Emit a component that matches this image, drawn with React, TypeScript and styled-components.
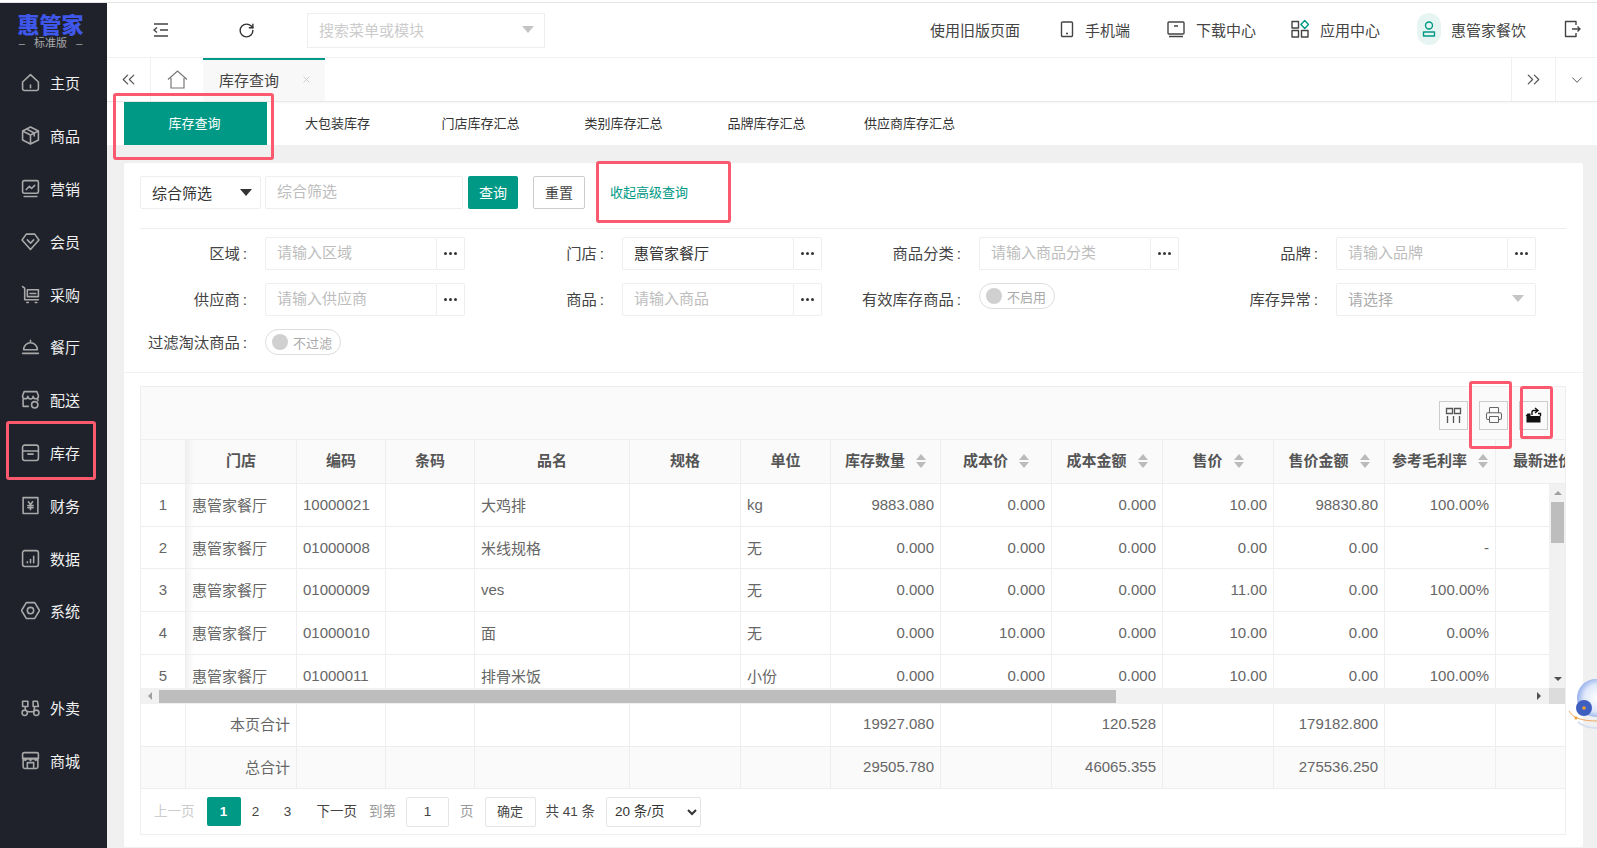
import React from "react"
import styled, { createGlobalStyle } from "styled-components"
import { ChevronDown, ChevronsLeft, ChevronsRight, Printer, RotateCw, X } from "lucide-react"

const GREEN = "#009985"
const LINE = "#eeeeee"
const COLS = "45px 111px 89px 89px 155px 111px 90px 110px 111px 111px 111px 111px 111px 95px"
const BODY_COLS = "45px 111px 89px 89px 155px 111px 90px 110px 111px 111px 111px 111px 111px 54px"

const GlobalStyle = createGlobalStyle`
  html, body {
    margin: 0;
    padding: 0;
    height: 100%;
    overflow: hidden;
    background: #fff;
    font-family: "Liberation Sans", "Noto Sans CJK SC", sans-serif;
    font-size: 15px;
    color: #333;
  }
  * { box-sizing: border-box; }
`

const Shell = styled.div`
  position: relative;
  display: flex;
  width: 1597px;
  height: 848px;
  overflow: hidden;
  padding-top: 3px;
  background: linear-gradient(#fff 0 2px, #e4e4e4 2px 3px, #fff 3px);
`

const Sidebar = styled.aside`
  width: 107px;
  flex: none;
  background: #1f222b;
  color: #f0f0f0;
`

const Logo = styled.div`
  height: 54px;
  display: flex;
  flex-direction: column;
  align-items: center;
  padding: 7px 6px 0 0;
`

const LogoName = styled.div`
  font-family: "Noto Sans CJK SC", sans-serif;
  font-weight: 900;
  font-size: 22px;
  line-height: 26px;
  color: #3f57ea;
`

const LogoEdition = styled.div`
  font-size: 11px;
  line-height: 14px;
  color: #a8a8a8;
  white-space: pre;
`

const NavItem = styled.div<{ $gap?: boolean }>`
  height: 52.8px;
  display: flex;
  align-items: center;
  gap: 10px;
  padding: 0 0 1px 21px;
  font-size: 15px;
  margin-top: ${p => (p.$gap ? "44px" : "0")};
`

const NavIcon = styled.svg`
  width: 19px;
  height: 19px;
  fill: none;
  stroke: #a9a9a9;
  stroke-width: 1.5;
  stroke-linejoin: round;
  stroke-linecap: round;
`

const Content = styled.div`
  flex: 1;
  min-width: 0;
  display: flex;
  flex-direction: column;
`

const TopBar = styled.header`
  height: 55px;
  flex: none;
  display: flex;
  align-items: center;
  border-bottom: 1px solid #f2f2f2;
`

const ToolIcon = styled.div<{ $w: number }>`
  width: ${p => p.$w}px;
  flex: none;
  display: flex;
  justify-content: center;
  color: #333;
`

const SearchBox = styled.div`
  width: 238px;
  height: 35px;
  margin-left: 28px;
  border: 1px solid #eee;
  display: flex;
  align-items: center;
  justify-content: space-between;
  padding: 0 10px 2px 11px;
  color: #ccc;
  font-size: 15px;
`

const Caret = styled.i<{ $color?: string }>`
  width: 0;
  height: 0;
  border-left: 6px solid transparent;
  border-right: 6px solid transparent;
  border-top: 7px solid ${p => p.$color || "#c4c4c4"};
`

const TopActions = styled.div`
  margin-left: auto;
  display: flex;
  align-items: center;
  padding: 0 15px 2px 0;
  color: #444;
  font-size: 15px;
`

const TopAction = styled.div<{ $left: number; $gap?: number }>`
  display: flex;
  align-items: center;
  gap: ${p => p.$gap ?? 12}px;
  margin-left: ${p => p.$left}px;
  white-space: nowrap;
`

const TopIcon = styled.svg<{ $teal?: boolean }>`
  width: 20px;
  height: 20px;
  fill: none;
  stroke: ${p => (p.$teal ? GREEN : "#444")};
  stroke-width: 1.4;
  stroke-linejoin: round;
`

const Avatar = styled.span`
  width: 24px;
  height: 32px;
  border-radius: 12px;
  background: #e6f5f2;
  display: flex;
  align-items: center;
  justify-content: center;
`

const TabBar = styled.nav`
  height: 44px;
  flex: none;
  display: flex;
  align-items: stretch;
  border-bottom: 1px solid #e8e8e8;
  box-shadow: 0 1px 2px rgba(0, 0, 0, 0.04);
  position: relative;
`

const TabIconCell = styled.div<{ $w: number; $border?: string }>`
  width: ${p => p.$w}px;
  flex: none;
  display: flex;
  align-items: center;
  justify-content: center;
  color: #555;
  border-left: ${p => (p.$border === "left" ? "1px solid #f0f0f0" : "0")};
  border-right: ${p => (p.$border === "right" ? "1px solid #f0f0f0" : "0")};
`

const PageTab = styled.div`
  width: 122px;
  flex: none;
  border-top: 2px solid ${GREEN};
  background: #f8f8f8;
  display: flex;
  align-items: center;
  gap: 22px;
  padding: 0 0 3px 16px;
  font-size: 15px;
  color: #444;
`

const Spacer = styled.div`
  flex: 1;
`

const SubTabs = styled.div`
  height: 43px;
  flex: none;
  display: flex;
  padding-left: 17px;
  background: #fff;
`

const SubTab = styled.div<{ $active?: boolean }>`
  width: 143px;
  display: flex;
  align-items: center;
  justify-content: center;
  padding: 0 2px 2px 0;
  font-size: 13px;
  background: ${p => (p.$active ? GREEN : "transparent")};
  color: ${p => (p.$active ? "#fff" : "#333")};
`

const Main = styled.main`
  flex: 1;
  min-height: 0;
  background: #f0f0f0;
  padding: 18px 14px 0 17px;
`

const Card = styled.section`
  height: 684px;
  background: #fff;
  border-radius: 2px;
`

const Filters = styled.div`
  padding: 13px 17px 17px 16px;
  border-bottom: 1px solid #f2f2f2;
`

const QueryRow = styled.div`
  height: 33px;
  display: flex;
  align-items: stretch;
  margin-bottom: 19px;
`

const QuerySelect = styled.div`
  width: 121px;
  border: 1px solid #eee;
  border-radius: 2px;
  display: flex;
  align-items: center;
  justify-content: space-between;
  padding: 0 8px 1px 11px;
  color: #333;
`

const TextInput = styled.input<{ $w?: number; $left?: number }>`
  width: ${p => (p.$w ? `${p.$w}px` : "100%")};
  min-width: 0;
  height: 100%;
  margin-left: ${p => p.$left ?? 0}px;
  border: 1px solid #eee;
  border-radius: 2px;
  outline: 0;
  padding: 0 11px 2px;
  font: inherit;
  color: #333;
  &::placeholder { color: #bdbdbd; }
`

const PrimaryBtn = styled.div`
  width: 50px;
  margin-left: 5px;
  padding-bottom: 2px;
  background: ${GREEN};
  border-radius: 2px;
  color: #fff;
  font-size: 14px;
  display: flex;
  align-items: center;
  justify-content: center;
`

const GhostBtn = styled.div`
  width: 52px;
  margin-left: 15px;
  padding-bottom: 2px;
  border: 1px solid #ccc;
  border-radius: 2px;
  color: #444;
  font-size: 14px;
  display: flex;
  align-items: center;
  justify-content: center;
`

const LinkText = styled.div`
  margin-left: 25px;
  padding-bottom: 2px;
  color: ${GREEN};
  font-size: 13px;
  display: flex;
  align-items: center;
`

const FormGrid = styled.div`
  border-top: 1px solid ${LINE};
  padding-top: 8px;
  display: grid;
  grid-template-columns: repeat(4, 357px);
  row-gap: 13px;
`

const Field = styled.div`
  display: flex;
  align-items: center;
`

const Label = styled.label`
  width: 108px;
  margin-right: 17px;
  padding: 0 1px 3px 0;
  flex: none;
  display: flex;
  align-items: baseline;
  justify-content: flex-end;
  color: #444;
  font-size: 15.3px;
  white-space: nowrap;
`

const Colon = styled.span`
  margin-left: 3px;
`

const InputGroup = styled.div`
  width: 200px;
  height: 33px;
  display: flex;
`

const DotsBtn = styled.div`
  width: 28px;
  flex: none;
  border: 1px solid #eee;
  border-left: 0;
  border-radius: 0 2px 2px 0;
  display: flex;
  align-items: center;
  justify-content: center;
  gap: 2px;
`

const Dot = styled.i`
  width: 3px;
  height: 3px;
  border-radius: 50%;
  background: #333;
`

const SelectBox = styled.div`
  width: 200px;
  height: 33px;
  border: 1px solid #eee;
  border-radius: 2px;
  display: flex;
  align-items: center;
  justify-content: space-between;
  padding: 0 11px 2px;
  color: #aaa;
`

const Toggle = styled.div`
  width: 76px;
  height: 26px;
  align-self: flex-start;
  border: 1px solid #ddd;
  border-radius: 13px;
  display: flex;
  align-items: center;
  gap: 5px;
  padding-left: 6px;
  color: #aaa;
  font-size: 13px;
`

const Knob = styled.i`
  width: 16px;
  height: 16px;
  border-radius: 50%;
  background: #d0d0d0;
`

const TableBox = styled.div`
  margin: 13px 17px 0 16px;
  border: 1px solid ${LINE};
  overflow: hidden;
`

const TableTools = styled.div`
  height: 53px;
  background: #fafafa;
  display: flex;
  align-items: center;
  justify-content: flex-end;
  gap: 11px;
  padding: 4px 17px 0 0;
  border-bottom: 1px solid ${LINE};
`

const ToolBtn = styled.div`
  width: 29px;
  height: 29px;
  border: 1px solid #ccc;
  display: flex;
  align-items: center;
  justify-content: center;
  color: #666;
`

const Row = styled.div<{ $cols: string; $h: number; $bg?: string }>`
  display: grid;
  grid-template-columns: ${p => p.$cols};
  height: ${p => p.$h}px;
  background: ${p => p.$bg || "#fff"};
  border-bottom: 1px solid ${LINE};
  flex: none;
`

const HeadCell = styled.div<{ $shadow?: boolean }>`
  display: flex;
  align-items: center;
  justify-content: center;
  gap: 11px;
  border-right: 1px solid ${LINE};
  padding-bottom: 4px;
  font-weight: 700;
  font-size: 15px;
  color: #555;
  white-space: nowrap;
  background: ${p => (p.$shadow ? "linear-gradient(90deg, #efefef, transparent 8px)" : "none")};
`

const Cell = styled.div<{ $align?: string; $shadow?: boolean; $lift?: number }>`
  display: flex;
  align-items: center;
  justify-content: ${p =>
    p.$align === "right" ? "flex-end" : p.$align === "center" ? "center" : "flex-start"};
  padding: 0 6px ${p => p.$lift ?? 1}px;
  border-right: 1px solid ${LINE};
  color: #666;
  font-size: 15px;
  white-space: nowrap;
  background: ${p => (p.$shadow ? "linear-gradient(90deg, #f2f2f2, transparent 8px)" : "none")};
`

const Sort = styled.span`
  display: flex;
  flex-direction: column;
  gap: 2px;
  margin-top: 3px;
`

const SortUp = styled.i`
  width: 0;
  height: 0;
  border-left: 5.5px solid transparent;
  border-right: 5.5px solid transparent;
  border-bottom: 6px solid #bbb;
`

const SortDown = styled.i`
  width: 0;
  height: 0;
  border-left: 5.5px solid transparent;
  border-right: 5.5px solid transparent;
  border-top: 6px solid #bbb;
`

const BodyWrap = styled.div`
  display: flex;
  height: 204px;
  overflow: hidden;
`

const BodyRows = styled.div`
  width: 1408px;
  flex: none;
  overflow: hidden;
`

const VScroll = styled.div`
  width: 17px;
  flex: none;
  background: #f1f1f1;
  display: flex;
  flex-direction: column;
  align-items: center;
  padding-top: 7px;
`

const ArrowUp = styled.i`
  width: 0;
  height: 0;
  border-left: 4px solid transparent;
  border-right: 4px solid transparent;
  border-bottom: 4px solid #a0a0a0;
`

const ArrowDown = styled.i`
  width: 0;
  height: 0;
  margin-top: auto;
  margin-bottom: 7px;
  border-left: 4px solid transparent;
  border-right: 4px solid transparent;
  border-top: 4px solid #505050;
`

const VThumb = styled.div`
  width: 13px;
  height: 41px;
  margin-top: 7px;
  background: #bdbdbd;
`

const HScroll = styled.div`
  height: 16px;
  background: #f1f1f1;
  display: flex;
  align-items: center;
  padding-left: 7px;
`

const ArrowLeft = styled.i`
  width: 0;
  height: 0;
  border-top: 4px solid transparent;
  border-bottom: 4px solid transparent;
  border-right: 4px solid #a0a0a0;
`

const ArrowRight = styled.i`
  width: 0;
  height: 0;
  margin-left: auto;
  border-top: 4px solid transparent;
  border-bottom: 4px solid transparent;
  border-left: 4px solid #505050;
`

const HThumb = styled.div`
  width: 957px;
  height: 13px;
  margin-left: 7px;
  background: #bdbdbd;
`

const Corner = styled.div`
  width: 16px;
  height: 16px;
  margin-left: 8px;
  background: #dcdcdc;
`

const Pager = styled.div`
  height: 45px;
  display: flex;
  align-items: center;
  padding-left: 13px;
  font-size: 13.5px;
  color: #444;
`

const PageText = styled.span<{ $color?: string; $left?: number }>`
  color: ${p => p.$color || "#444"};
  margin-left: ${p => p.$left ?? 0}px;
  padding-bottom: 3px;
  white-space: nowrap;
`

const PageNum = styled.span<{ $active?: boolean; $left?: number }>`
  width: 34px;
  height: 29px;
  flex: none;
  margin-left: ${p => p.$left ?? 0}px;
  border-radius: 2px;
  background: ${p => (p.$active ? GREEN : "transparent")};
  color: ${p => (p.$active ? "#fff" : "#444")};
  font-weight: ${p => (p.$active ? 700 : 400)};
  display: flex;
  align-items: center;
  justify-content: center;
`

const PageInput = styled.div`
  width: 43px;
  height: 30px;
  margin-left: 10px;
  border: 1px solid #e4e4e4;
  border-radius: 2px;
  display: flex;
  align-items: center;
  justify-content: center;
`

const PageBtn = styled.div`
  width: 51px;
  height: 30px;
  margin-left: 11px;
  padding-bottom: 2px;
  border: 1px solid #e4e4e4;
  border-radius: 2px;
  display: flex;
  align-items: center;
  justify-content: center;
  font-size: 13px;
`

const PageSelect = styled.select`
  width: 95px;
  height: 30px;
  margin-left: 11px;
  padding-left: 4px;
  border: 1px solid #e4e4e4;
  border-radius: 2px;
  background: #fff;
  font: inherit;
  color: #333;
`

// red annotation boxes drawn on top of the screenshot
const Mark = styled.div<{ $l: number; $t: number; $w: number; $h: number }>`
  position: absolute;
  left: ${p => p.$l}px;
  top: ${p => p.$t}px;
  width: ${p => p.$w}px;
  height: ${p => p.$h}px;
  border: 3px solid #fb5a6e;
  border-radius: 3px;
  pointer-events: none;
`

const Ball = styled.svg`
  position: absolute;
  left: 1568px;
  top: 678px;
  width: 29px;
  height: 52px;
`

const nav: { label: string; icon: React.ReactNode; gap?: boolean }[] = [
  { label: "主页", icon: <path d="M1.5 8.5 9 1.5l7.5 7V15a1.5 1.5 0 0 1-1.5 1.5H3A1.5 1.5 0 0 1 1.5 15zM9 11.5V14" /> },
  { label: "商品", icon: <path d="M9 1 16.5 4.8v8.4L9 17l-7.5-3.8V4.8zM1.5 4.8 9 8.6l7.5-3.8M9 8.6V17M5.5 3l7 3.6v2.8" /> },
  { label: "营销", icon: <path d="M3 1.5h12A1.5 1.5 0 0 1 16.5 3v9a1.5 1.5 0 0 1-1.5 1.5H3A1.5 1.5 0 0 1 1.5 12V3A1.5 1.5 0 0 1 3 1.5zM3 16.5h12M5 10l3-3 2 2 3-3" /> },
  { label: "会员", icon: <path d="M5 2h8l4 5.5L9 16.5 1 7.5zM6 7.5l3 3 3-3" /> },
  { label: "采购", icon: <path d="M1.5 1.5 3.5 3v11h13M6 4.5h10.5v6.5H6zM8.5 8h5.5M5.5 16.5h1.5M13.5 16.5H15" /> },
  { label: "餐厅", icon: <path d="M2.5 12a6.5 6.5 0 0 1 13 0zM1.5 15.5h15M9 3v2.5" /> },
  { label: "配送", icon: <path d="M3 1.5h12l1.5 4a2.5 2.5 0 0 1-5 .5 2.5 2.5 0 0 1-5 0 2.5 2.5 0 0 1-5-.5zM2 9v6.5h5M16 9v1M13 11a3 3 0 1 0 0 6 3 3 0 0 0 0-6z" /> },
  { label: "库存", icon: <path d="M3.5 2h11a2 2 0 0 1 2 2v3.5h-15V4a2 2 0 0 1 2-2zM1.5 7.5v7a2 2 0 0 0 2 2h11a2 2 0 0 0 2-2v-7M6.5 10.5h5" /> },
  { label: "财务", icon: <path d="M2 1.5h14v15H2zM7 5.5l2 2.5 2-2.5M6.5 9h5M6.5 11h5M9 8v5" /> },
  { label: "数据", icon: <path d="M3.5 1.5h11A2 2 0 0 1 16.5 3.5v11a2 2 0 0 1-2 2h-11a2 2 0 0 1-2-2v-11a2 2 0 0 1 2-2zM6 13v-1M9 13v-3M12 13V7" /> },
  { label: "系统", icon: <path d="M5 1.5h8L17.5 9 13 16.5H5L.5 9zM9 6a3 3 0 1 0 0 6 3 3 0 0 0 0-6z" /> },
  { label: "外卖", gap: true, icon: <path d="M1.5 3h5v5h-5zM11.5 3h4l1 5h-5zM4 8v3M1 14a2.5 2.5 0 1 0 5 0 2.5 2.5 0 0 0-5 0zM12 14a2.5 2.5 0 1 0 5 0 2.5 2.5 0 0 0-5 0zM6 13h6l1-5" /> },
  { label: "商城", icon: <path d="M3 1.5h12A1.5 1.5 0 0 1 16.5 3v4h-15V3A1.5 1.5 0 0 1 3 1.5zM2 7v8a1.5 1.5 0 0 0 1.5 1.5h11A1.5 1.5 0 0 0 16 15V7M6 16.5V11h6v5.5M1.5 7l2.5 2 2.5-2L9 9l2.5-2L14 9l2.5-2" /> },
]

const subTabs = ["库存查询", "大包装库存", "门店库存汇总", "类别库存汇总", "品牌库存汇总", "供应商库存汇总"]

const heads: { t: string; sort?: boolean }[] = [
  { t: "" }, { t: "门店" }, { t: "编码" }, { t: "条码" }, { t: "品名" }, { t: "规格" }, { t: "单位" },
  { t: "库存数量", sort: true }, { t: "成本价", sort: true }, { t: "成本金额", sort: true },
  { t: "售价", sort: true }, { t: "售价金额", sort: true }, { t: "参考毛利率", sort: true }, { t: "最新进价" },
]

const rows = [
  ["1", "惠管家餐厅", "10000021", "", "大鸡排", "", "kg", "9883.080", "0.000", "0.000", "10.00", "98830.80", "100.00%", ""],
  ["2", "惠管家餐厅", "01000008", "", "米线规格", "", "无", "0.000", "0.000", "0.000", "0.00", "0.00", "-", ""],
  ["3", "惠管家餐厅", "01000009", "", "ves", "", "无", "0.000", "0.000", "0.000", "11.00", "0.00", "100.00%", ""],
  ["4", "惠管家餐厅", "01000010", "", "面", "", "无", "0.000", "10.000", "0.000", "10.00", "0.00", "0.00%", ""],
  ["5", "惠管家餐厅", "01000011", "", "排骨米饭", "", "小份", "0.000", "0.000", "0.000", "10.00", "0.00", "100.00%", ""],
]

const totals = [
  ["", "本页合计", "", "", "", "", "", "19927.080", "", "120.528", "", "179182.800", "", ""],
  ["", "总合计", "", "", "", "", "", "29505.780", "", "46065.355", "", "275536.250", "", ""],
]

function alignFor(i: number) {
  if (i === 0) return "center"
  if (i >= 7) return "right"
  return "left"
}

function FieldLabel({ text }: { text: string }) {
  return (
    <Label>
      {text}
      <Colon>:</Colon>
    </Label>
  )
}

function PickerField({ label, placeholder, value }: { label: string; placeholder?: string; value?: string }) {
  return (
    <Field>
      <FieldLabel text={label} />
      <InputGroup>
        <TextInput placeholder={placeholder} defaultValue={value} readOnly />
        <DotsBtn>
          <Dot />
          <Dot />
          <Dot />
        </DotsBtn>
      </InputGroup>
    </Field>
  )
}

export default function App() {
  return (
    <Shell>
      <GlobalStyle />
      <Sidebar>
        <Logo>
          <LogoName>惠管家</LogoName>
          <LogoEdition>{"–   标准版   –"}</LogoEdition>
        </Logo>
        {nav.map(item => (
          <NavItem key={item.label} $gap={item.gap}>
            <NavIcon viewBox="0 0 18 18">{item.icon}</NavIcon>
            {item.label}
          </NavItem>
        ))}
      </Sidebar>

      <Content>
        <TopBar>
          <ToolIcon $w={107}>
            <TopIcon viewBox="0 0 20 20">
              <path d="M3 4h14M9 10h8M3 16h14M6 7.5 3 10l3 2.5" />
            </TopIcon>
          </ToolIcon>
          <ToolIcon $w={65}>
            <RotateCw size={17} strokeWidth={2} color="#333" />
          </ToolIcon>
          <SearchBox>
            搜索菜单或模块
            <Caret />
          </SearchBox>
          <TopActions>
            <TopAction $left={0}>使用旧版页面</TopAction>
            <TopAction $left={37} $gap={8}>
              <TopIcon viewBox="0 0 20 20">
                <path d="M5.5 3h9a1 1 0 0 1 1 1v12.5a1 1 0 0 1-1 1h-9a1 1 0 0 1-1-1V4a1 1 0 0 1 1-1zM9 14.5h2" />
              </TopIcon>
              手机端
            </TopAction>
            <TopAction $left={36} $gap={10}>
              <TopIcon viewBox="0 0 20 20">
                <path d="M3 3h14a1 1 0 0 1 1 1v10a1 1 0 0 1-1 1H3a1 1 0 0 1-1-1V4a1 1 0 0 1 1-1zM3 17.5h14M8 7h4" />
              </TopIcon>
              下载中心
            </TopAction>
            <TopAction $left={34} $gap={10}>
              <TopIcon viewBox="0 0 20 20">
                <path d="M2 2.5h6.5V9H2zM2 11.5h6.5V18H2zM11.5 11.5H18V18h-6.5z" />
                <path d="M14.7 1.5 18.5 5.5l-3.8 4-3.8-4z" stroke={GREEN} />
              </TopIcon>
              应用中心
            </TopAction>
            <TopAction $left={37} $gap={10}>
              <Avatar>
                <TopIcon $teal viewBox="0 0 20 20">
                  <path d="M10 3a3.5 3.5 0 1 0 0 7 3.5 3.5 0 0 0 0-7zM4.5 13h11v4h-11z" />
                </TopIcon>
              </Avatar>
              惠管家餐饮
            </TopAction>
            <TopAction $left={36}>
              <TopIcon viewBox="0 0 20 20">
                <path d="M14 6V2.5H3.5v15H14V14M10 10h8M15.5 7.5 18 10l-2.5 2.5" />
              </TopIcon>
            </TopAction>
          </TopActions>
        </TopBar>

        <TabBar>
          <TabIconCell $w={44} $border="right">
            <ChevronsLeft size={21} strokeWidth={1.4} />
          </TabIconCell>
          <TabIconCell $w={52}>
            <svg width="21" height="19" viewBox="0 0 21 19" fill="none" stroke="#777" strokeWidth="1.2">
              <path d="M1 9.5 10.5 1 20 9.5M4 8v10h13V8" />
            </svg>
          </TabIconCell>
          <PageTab>
            库存查询
            <X size={11} color="#ccc" />
          </PageTab>
          <Spacer />
          <TabIconCell $w={44} $border="left">
            <ChevronsRight size={21} strokeWidth={1.4} />
          </TabIconCell>
          <TabIconCell $w={42} $border="left">
            <ChevronDown size={18} strokeWidth={1.3} />
          </TabIconCell>
        </TabBar>

        <SubTabs>
          {subTabs.map((t, i) => (
            <SubTab key={t} $active={i === 0}>
              {t}
            </SubTab>
          ))}
        </SubTabs>

        <Main>
          <Card>
            <Filters>
              <QueryRow>
                <QuerySelect>
                  综合筛选
                  <Caret $color="#333" />
                </QuerySelect>
                <TextInput $w={198} $left={4} placeholder="综合筛选" readOnly />
                <PrimaryBtn>查询</PrimaryBtn>
                <GhostBtn>重置</GhostBtn>
                <LinkText>收起高级查询</LinkText>
              </QueryRow>
              <FormGrid>
                <PickerField label="区域" placeholder="请输入区域" />
                <PickerField label="门店" value="惠管家餐厅" />
                <PickerField label="商品分类" placeholder="请输入商品分类" />
                <PickerField label="品牌" placeholder="请输入品牌" />
                <PickerField label="供应商" placeholder="请输入供应商" />
                <PickerField label="商品" placeholder="请输入商品" />
                <Field>
                  <FieldLabel text="有效库存商品" />
                  <Toggle>
                    <Knob />
                    不启用
                  </Toggle>
                </Field>
                <Field>
                  <FieldLabel text="库存异常" />
                  <SelectBox>
                    请选择
                    <Caret />
                  </SelectBox>
                </Field>
                <Field>
                  <FieldLabel text="过滤淘汰商品" />
                  <Toggle>
                    <Knob />
                    不过滤
                  </Toggle>
                </Field>
              </FormGrid>
            </Filters>

            <TableBox>
              <TableTools>
                <ToolBtn>
                  <svg width="17" height="17" viewBox="0 0 17 17" fill="none" stroke="#555" strokeWidth="1.3">
                    <path d="M1.5 1.5h6v5h-6zM9.5 1.5h6v5h-6zM2.5 9v7M8.5 9v7M14.5 9v7" />
                  </svg>
                </ToolBtn>
                <ToolBtn>
                  <Printer size={18} strokeWidth={1.4} />
                </ToolBtn>
                <ToolBtn>
                  <svg width="17" height="17" viewBox="0 0 17 17">
                    <path d="M1.5 9h14v6.5h-14zM.5 9 2.5 6.5h3V9z" fill="#111" />
                    <path d="M7 8V5a1.5 1.5 0 0 1 1.5-1.5H12M10 1l3 2.5L10 6M13 6.5h2.5V9" fill="none" stroke="#111" strokeWidth="1.4" />
                  </svg>
                </ToolBtn>
              </TableTools>

              <Row $cols={COLS} $h={44} $bg="#fafafa">
                {heads.map((h, i) => (
                  <HeadCell key={i} $shadow={i === 1}>
                    {h.t}
                    {h.sort && (
                      <Sort>
                        <SortUp />
                        <SortDown />
                      </Sort>
                    )}
                  </HeadCell>
                ))}
              </Row>

              <BodyWrap>
                <BodyRows>
                  {rows.map(r => (
                    <Row key={r[0]} $cols={BODY_COLS} $h={42.7}>
                      {r.map((v, i) => (
                        <Cell key={i} $align={alignFor(i)} $shadow={i === 1}>
                          {v}
                        </Cell>
                      ))}
                    </Row>
                  ))}
                </BodyRows>
                <VScroll>
                  <ArrowUp />
                  <VThumb />
                  <ArrowDown />
                </VScroll>
              </BodyWrap>

              <HScroll>
                <ArrowLeft />
                <HThumb />
                <ArrowRight />
                <Corner />
              </HScroll>

              {totals.map((r, n) => (
                <Row key={n} $cols={COLS} $h={n === 0 ? 43 : 42} $bg={n === 0 ? "#fff" : "#fafafa"}>
                  {r.map((v, i) => (
                    <Cell key={i} $align={i === 0 ? "center" : "right"} $lift={3}>
                      {v}
                    </Cell>
                  ))}
                </Row>
              ))}

              <Pager>
                <PageText $color="#ccc">上一页</PageText>
                <PageNum $active $left={12}>1</PageNum>
                <PageNum $left={-2}>2</PageNum>
                <PageNum $left={-2}>3</PageNum>
                <PageText $left={12}>下一页</PageText>
                <PageText $color="#999" $left={12}>到第</PageText>
                <PageInput>1</PageInput>
                <PageText $color="#999" $left={11}>页</PageText>
                <PageBtn>确定</PageBtn>
                <PageText $left={10}>共 41 条</PageText>
                <PageSelect defaultValue="20">
                  <option value="20">20 条/页</option>
                  <option value="50">50 条/页</option>
                </PageSelect>
              </Pager>
            </TableBox>
          </Card>
        </Main>
      </Content>

      <Ball viewBox="0 0 29 52">
        <defs>
          <radialGradient id="sphere" cx="0.55" cy="0.5" r="0.6">
            <stop offset="0" stopColor="#ffffff" />
            <stop offset="0.6" stopColor="#dfe8fa" />
            <stop offset="1" stopColor="#7f9fe6" />
          </radialGradient>
        </defs>
        <circle cx="28" cy="20" r="19" fill="url(#sphere)" />
        <circle cx="16" cy="30" r="8" fill="#3f5fc0" />
        <circle cx="16" cy="30" r="1.8" fill="#f0a030" />
        <path d="M1 33c4 8 16 10 28 10" fill="none" stroke="#f0a860" strokeWidth="1" />
        <circle cx="8" cy="40" r="1.5" fill="#f0a030" />
        <path d="M10 44c6 5 12 6 19 6" fill="none" stroke="#d8e0f0" strokeWidth="2" />
      </Ball>

      <Mark $l={113} $t={93} $w={161} $h={67} />
      <Mark $l={6} $t={421} $w={90} $h={59} />
      <Mark $l={596} $t={161} $w={135} $h={62} />
      <Mark $l={1469} $t={381} $w={43} $h={68} />
      <Mark $l={1520} $t={386} $w={33} $h={53} />
    </Shell>
  )
}
